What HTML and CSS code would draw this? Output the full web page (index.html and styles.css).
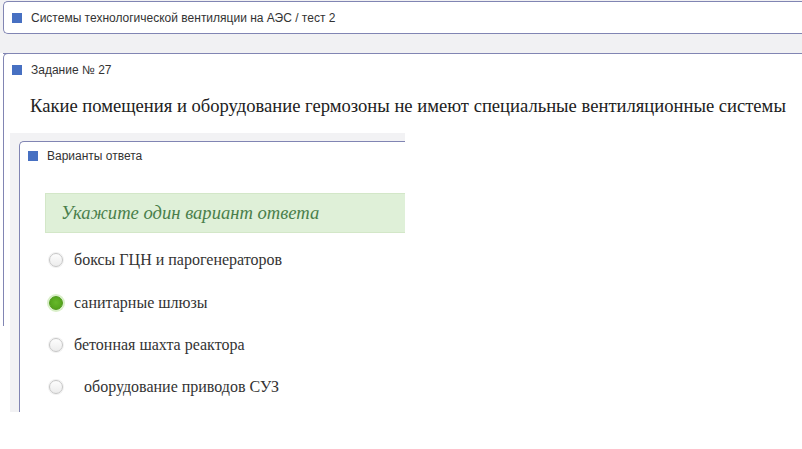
FILE: index.html
```html
<!DOCTYPE html>
<html lang="ru">
<head>
    <meta charset="UTF-8">
    <meta name="viewport" content="width=device-width, initial-scale=1.0">
    <title>Тест</title>
    <link rel="stylesheet" href="styles.css">
</head>
<body>
    <div class="top_band">
        <div class="panel">
            <div class="panel_head"><span class="mark"></span>Системы технологической вентиляции на АЭС / тест 2</div>
        </div>
    </div>
    <div class="panel task">
        <div class="panel_head"><span class="mark"></span>Задание № 27</div>
        <div class="question">Какие помещения и оборудование гермозоны не имеют специальные вентиляционные системы</div>
        <div class="answers_wrap">
            <div class="panel answers">
                <div class="panel_head small"><span class="mark"></span>Варианты ответа</div>
                <div class="hint">Укажите один вариант ответа</div>
                <ul class="options">
                    <li><span class="radio"></span>боксы ГЦН и парогенераторов</li>
                    <li><span class="radio checked"></span>санитарные шлюзы</li>
                    <li><span class="radio"></span>бетонная шахта реактора</li>
                    <li><span class="radio"></span><span class="indent">оборудование приводов СУЗ</span></li>
                </ul>
            </div>
        </div>
    </div>
</body>
</html>
```

FILE: styles.css
```css
*{margin:0; padding:0; box-sizing:border-box;}
li{list-style:none;}
html,body{background:#fff;}
body{font-family:"Liberation Sans", Arial, sans-serif; font-size:12px; color:#333;}

.top_band{height:53px; padding:1px 0 0 3px; background:#f1f1f3;}

/* panels run off the right edge, so no right border */
.panel{background:#fff; border:1px solid #8185b3; border-right:0 none; border-radius:5px 0 0 5px;}
.panel_head{display:flex; align-items:center; gap:9px; height:31px; padding-left:8px; font-size:12px; color:#333;}
.panel_head.small{height:27px;}
.mark{width:10px; height:10px; background:#4770c2;}

/* task panel: left edge stops before the answers block ends */
.task{position:relative; margin-left:3px; padding-left:1px; border-left:0 none; border-bottom:0 none; border-radius:0;}
.task:before{content:""; position:absolute; left:0; top:-1px; width:8px; height:272px; border-left:1px solid #8185b3; border-top:1px solid #8185b3; border-top-left-radius:5px;}
.question{margin-top:9px; padding-left:26px; font-family:"Liberation Serif", "Times New Roman", serif; font-size:18.6px; line-height:24px; color:#222; white-space:nowrap;}

.answers_wrap{width:395px; height:279px; margin:15px 0 0 6px; padding:8px 0 0 9px; background:#f2f2f4; overflow:hidden;}
.answers{height:300px; border-bottom:0 none; border-radius:5px 0 0 0;}

.hint{height:40px; margin:24px 0 0 25px; padding-left:15px; background:#dff0d8; border:1px solid #d3e7c8; border-right:0 none; font-family:"Liberation Serif", "Times New Roman", serif; font-style:italic; font-size:18.6px; line-height:38px; color:#4a7f4b; white-space:nowrap;}

.options{margin-top:6px; padding-left:29px;}
.options li{display:flex; align-items:center; gap:11px; height:42.4px; font-family:"Liberation Serif", "Times New Roman", serif; font-size:16px; color:#333; white-space:nowrap;}
.radio{width:14px; height:14px; border-radius:50%; border:1px solid #c6c6c6; background:linear-gradient(#fdfdfd, #ececec); box-shadow:0 0 0 1px #f1f1f1;}
.radio.checked{border-color:#4f9a1a; background:radial-gradient(circle at 50% 45%, #66b82a, #4d9c17); box-shadow:0 0 0 2px #d9efc9;}
.indent{padding-left:10px;}
```
